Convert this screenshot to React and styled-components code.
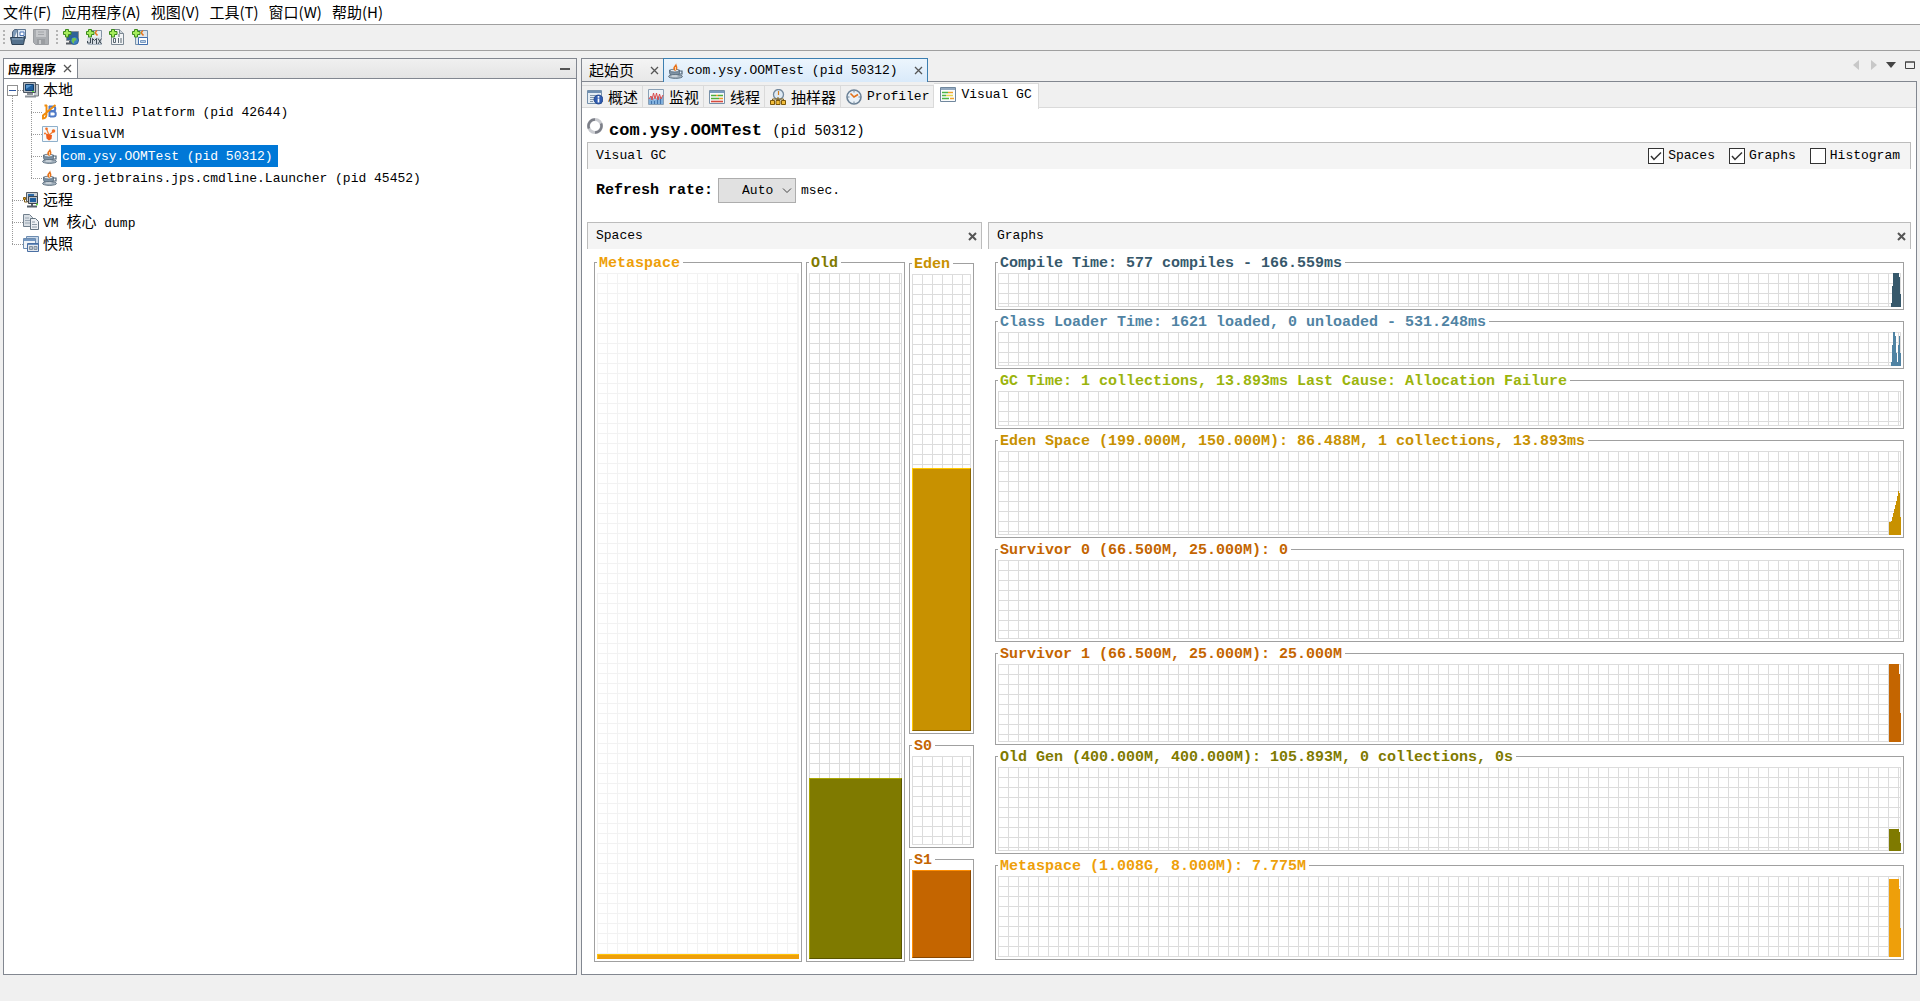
import { useState } from "react";
import styled, { createGlobalStyle, css } from "styled-components";

const mono = `"Liberation Mono", "Noto Sans CJK SC", monospace`;
const sans = `"Noto Sans CJK SC", sans-serif`;

const color = {
    window: "#f0f0f0",
    frame: "#828790",
    header: "#f4f4f4",
    headerLine: "#bcbcbc",
    box: "#a0a0a0",
    grid: "#dcdcdc",
    gridLight: "#f2f2f2",
};

const palette = {
    compile: "#36586b",
    loader: "#5083a3",
    gc: "#9bb40c",
    eden: "#c89100",
    survivor: "#c46500",
    old: "#7f7a00",
    meta: "#ee9f0a",
};

const menus = ["文件(F)", "应用程序(A)", "视图(V)", "工具(T)", "窗口(W)", "帮助(H)"];

const viewTabs = [
    { label: "概述", icon: "overview", cjk: true },
    { label: "监视", icon: "monitor", cjk: true },
    { label: "线程", icon: "threads", cjk: true },
    { label: "抽样器", icon: "sampler", cjk: true },
    { label: "Profiler", icon: "profiler" },
    { label: "Visual GC", icon: "visualgc", active: true },
];

const flat = (value, last) => [...Array(10).fill(value), ...last];

const graphs = [
    { title: "Compile Time: 577 compiles - 166.559ms", size: 58, plot: 34, tone: palette.compile, data: [0, 0, 4, 21, 34, 34, 34, 34, 34, 34, 30, 13] },
    { title: "Class Loader Time: 1621 loaded, 0 unloaded - 531.248ms", size: 58, plot: 34, tone: palette.loader, data: [0, 0, 4, 21, 34, 34, 30, 13, 4, 21, 30, 13] },
    { title: "GC Time: 1 collections, 13.893ms Last Cause: Allocation Failure", size: 59, plot: 34, tone: palette.gc, data: [] },
    { title: "Eden Space (199.000M, 150.000M): 86.488M, 1 collections, 13.893ms", size: 108, plot: 84, tone: palette.eden, data: [13, 13, 14, 18, 22, 26, 30, 34, 39, 44, 42, 18] },
    { title: "Survivor 0 (66.500M, 25.000M): 0", size: 102, plot: 78, tone: palette.survivor, data: [] },
    { title: "Survivor 1 (66.500M, 25.000M): 25.000M", size: 102, plot: 78, tone: palette.survivor, data: flat(78, [68, 29]) },
    { title: "Old Gen (400.000M, 400.000M): 105.893M, 0 collections, 0s", size: 108, plot: 84, tone: palette.old, data: flat(22, [19, 8]) },
    { title: "Metaspace (1.008G, 8.000M): 7.775M", size: 105, plot: 81, tone: palette.meta, data: flat(78, [68, 29]) },
];

const Plus = () => (
    <path d="M2.500 .5h3v2h2.500v3H5.500v2.500h-3V5.500H.5v-3h2z" fill="#a6ec5c" stroke="#3b8a1d" />
);

const JavaCup = () => (
    <>
        <path d="M1.500 7h10v2c0 3-2 4.500-5 4.500s-5-1.500-5-4.500z" fill="#7f93a5" stroke="#4f6375" strokeWidth=".8" />
        <ellipse cx="6.500" cy="7.600" rx="4.500" ry="1.400" fill="#dfe7ee" stroke="#4f6375" strokeWidth=".7" />
        <path d="M11.500 8h2.500v3H11" fill="none" stroke="#4f6375" strokeWidth="1.200" />
        <path d="M8 0c.5 2-3.500 3-2.500 6.500l1.500 1.500 2-1.500C10 4 9 3.500 8 0z" fill="#e8731c" />
        <path d="M7.500 4v3" stroke="#ffd2a0" />
        <ellipse cx="7.500" cy="13.500" rx="7" ry="1.900" fill="#a3b1bd" stroke="#4f6272" strokeWidth=".8" />
        <path d="M3.500 13h6" stroke="#eef2f5" />
    </>
);

const icons = {
    open: (
        <>
            <path d="M2.500 13V3l2-2.500H8" fill="#7f9bb8" stroke="#4b6078" />
            <path d="M7.500 .5h8v9h-8z" fill="#dbe6f2" stroke="#5f7690" />
            <path d="M10 3h4v3.500h-4z" fill="#fff" stroke="#4b75b5" />
            <path d="M.5 8.500h12l2.500-1-1.500 8H2z" fill="#54718c" stroke="#2f4357" />
            <path d="M2 10h11" stroke="#8eabc4" />
        </>
    ),
    save: (
        <>
            <path d="M.5 .5h15v15h-13l-2-2z" fill="#aaadb1" stroke="#9a9da1" />
            <path d="M3 1h10v7H3z" fill="#c6c8cb" />
            <path d="M5 3h6M5 5.500h6" stroke="#a2a5a9" />
            <path d="M4 10h8v6H4z" fill="#9a9da1" />
            <path d="M6 11h2v4H6z" fill="#c8cacc" />
        </>
    ),
    addHost: (
        <>
            <path d="M3.500 2.500h12v9h-12z" fill="#2f6297" stroke="#8b9096" />
            <path d="M3 14.500h8M7 12v2" stroke="#575d64" strokeWidth="2" />
            <circle cx="11.500" cy="11.500" r="4" fill="#3f81c4" stroke="#1f5690" strokeWidth=".8" />
            <path d="M9.500 9l3 0 1 2-2 1-1 3-2-3z" fill="#6fc34d" />
            <Plus />
        </>
    ),
    addJmx: (
        <>
            <path d="M2.500 1.500h13v14h-13z" fill="#e8eef3" stroke="#8394a5" />
            <path d="M11 1.500c-3 2.500-1 3 .5 5" fill="none" stroke="#e8731c" strokeWidth="1.500" />
            <path d="M1 8.500h15v7H1z" fill="#d5dbe1" />
            <path d="M4.500 9v5h-3v-2M6.500 15V9.500l2 2 2-2V15M12 9.500l3.500 5.500M15.500 9.500L12 15" fill="none" stroke="#3e4a55" />
            <Plus />
        </>
    ),
    addDump: (
        <>
            <path d="M2.500 .5h8l4 4v11h-12z" fill="#f2f4f6" stroke="#7b8792" />
            <path d="M10.500 .5v4h4" fill="#ccd3da" stroke="#7b8792" />
            <path d="M4.500 9.500h2v4h-2zM9.500 9v5M12 9v5M10 5v3" fill="none" stroke="#5b6771" />
            <Plus />
        </>
    ),
    addSnapshot: (
        <>
            <path d="M3.500 1.500h12v14h-12z" fill="#dde6ee" stroke="#7590ac" />
            <path d="M11 1.500c-3 2.500-1 3 .5 5" fill="none" stroke="#e8731c" strokeWidth="1.500" />
            <path d="M6.500 8.500h9v7h-9z" fill="#fff" stroke="#426fae" />
            <path d="M8.500 11.500h5v2h-5z" fill="#b9cfe8" stroke="#7c9cc2" />
            <Plus />
        </>
    ),
    computer: (
        <>
            <path d="M11 2.500h4.500V14H11" fill="#c9cdd1" stroke="#6f757b" />
            <path d="M.5 .5h12v10H.5z" fill="#b2b9c0" stroke="#4d5660" />
            <path d="M2.500 2.500h8v6h-8z" fill="#205f9e" stroke="#123d69" />
            <path d="M3 3h6L3 7z" fill="#5997cf" />
            <path d="M9 9.500h2" stroke="#63e63b" />
            <path d="M4 12h6M2 14.500h11" stroke="#8b9198" strokeWidth="2" />
        </>
    ),
    remote: (
        <>
            <path d="M3.500 .5h11v9h-11z" fill="#cbd0d5" stroke="#555e68" />
            <path d="M5 2h6v3H5z" fill="#2e6ba8" />
            <path d="M5.500 4.500h9v7h-9z" fill="#b8c0c8" stroke="#3d4650" />
            <path d="M7 6h6v4H7z" fill="#205f9e" />
            <path d="M4 14.500h10M9 12v2" stroke="#555e68" strokeWidth="2" />
            <path d="M13 12.500h2" stroke="#63e63b" strokeWidth="1.500" />
            <path d="M1.500 6v4h3" fill="none" stroke="#7e5a13" />
            <path d="M.5 5.500h2v2h-2z" fill="#eba928" stroke="#8a5d0a" />
        </>
    ),
    dump: (
        <>
            <path d="M.5 .5h6l3 3v9h-9z" fill="#d9dfe5" stroke="#72808d" />
            <path d="M2 4h4M2 6.500h5M2 9h5" stroke="#9aa6b2" />
            <path d="M7.500 4.500h5l3 3v8h-8z" fill="#edf0f3" stroke="#657481" />
            <path d="M9 8h3M9 10.500h5M9 13h5" stroke="#8d9aa6" />
        </>
    ),
    snapshot: (
        <>
            <path d="M3.500 .5h12v9h-12z" fill="#c8d8ea" stroke="#6d8cb0" />
            <path d="M.5 2.500h12v10H.5z" fill="#eef3f8" stroke="#6d8cb0" />
            <path d="M1 4h11" stroke="#7397c2" strokeWidth="2" />
            <path d="M4.500 7.500h11v8h-11z" fill="#e3e8ee" stroke="#4a6fa3" />
            <path d="M5 8.500h10" stroke="#6c91be" />
            <path d="M6.500 10.500h3v3h-3zM11 10.500h3v3h-3z" fill="#b8c2cc" stroke="#8492a0" />
        </>
    ),
    intellij: (
        <>
            <path d="M7.500 2v11M7 2.500h4c3 0 3 4.500 0 4.500H8M8 7.500h3.500c3 0 3 5 0 5H8" fill="none" stroke="#4f7ac7" strokeWidth="2" />
            <path d="M4.500 1v9c0 3-1 4.500-3.500 4.500v-3L13.500 1M2.500 1.500h2.500" fill="none" stroke="#f08c0c" strokeWidth="1.900" />
        </>
    ),
    visualvm: (
        <>
            <path d="M.5 .5h15v15H.5z" fill="#f7f9fb" stroke="#8fb0cb" />
            <path d="M4.500 3l2.500 6 4.500-3.500" fill="none" stroke="#f08138" strokeWidth="1.300" />
            <circle cx="4.500" cy="2.700" r="1.300" fill="#f26b21" />
            <circle cx="11.500" cy="5" r="1.800" fill="#f26b21" />
            <circle cx="3" cy="7.500" r="1" fill="#f26b21" />
            <path d="M4 7.500l3 1 3 .5-.5 4-2.500 1.500-2.500-2z" fill="#ee5d1b" />
        </>
    ),
    java: <JavaCup />,
    overview: (
        <>
            <path d="M.5 1.500h14v13H.5z" fill="#e5edf4" stroke="#7590ab" />
            <path d="M1 3h13" stroke="#6f8fb0" strokeWidth="2" />
            <path d="M3 6.500h8M3 8.500h5M3 10.500h4M3 12.500h3" stroke="#8296a8" />
            <circle cx="11.500" cy="10.500" r="4.500" fill="#2f5bb0" stroke="#1b3e84" strokeWidth=".8" />
            <path d="M11.500 7v1.800M11.500 9.500v4" stroke="#fff" strokeWidth="1.700" />
        </>
    ),
    monitor: (
        <>
            <path d="M.5 .5h15v15H.5z" fill="#eef3f8" stroke="#8aa0b5" />
            <path d="M1 10l3-3 3 4 3-4 3 2 2-2v8H1z" fill="#82b0dc" />
            <path d="M3.500 12v3M6.500 12v3M9.500 11v4M12.500 10v5" stroke="#4274ae" />
            <path d="M1 10l2-3 1 4 1.500-7 1.500 6 1.500-6L10 11l1.500-6L13 10l2-4" fill="none" stroke="#d84a4a" />
        </>
    ),
    threads: (
        <>
            <path d="M.5 1.500h15v13H.5z" fill="#f8fafb" stroke="#7790a8" />
            <path d="M1 3h14" stroke="#7c9cc0" strokeWidth="2" />
            <path d="M2 6.500h5M9 6.500h5M2 9.500h8" stroke="#4fad3b" strokeWidth="1.600" />
            <path d="M7 6.500h2M10 9.500h4" stroke="#ee9b27" strokeWidth="1.600" />
            <path d="M2 12.500h12" stroke="#d54b3e" strokeWidth="1.600" />
        </>
    ),
    sampler: (
        <>
            <circle cx="8.500" cy="5.500" r="5" fill="#dfeaf4" stroke="#73889c" strokeWidth="1.300" />
            <path d="M8.500 2v4" fill="none" stroke="#d47f1e" strokeWidth="1.200" />
            <path d="M2.500 12v-2h11v2M8 8v4" fill="none" stroke="#826017" />
            <path d="M.5 11.500h4v4h-4zM6 11.500h4v4H6zM11.500 11.500h4v4h-4z" fill="#f1bd3b" stroke="#7b5708" />
        </>
    ),
    profiler: (
        <>
            <circle cx="8" cy="8" r="7" fill="#e9f1f8" stroke="#6b8196" strokeWidth="1.600" />
            <path d="M8 2v1.500M8 12.500V14M2 8h1.500M12.500 8H14" stroke="#6e8295" />
            <path d="M4.500 4.500L8 8l4-2.500" fill="none" stroke="#e2721b" strokeWidth="1.600" />
        </>
    ),
    visualgc: (
        <>
            <path d="M.5 .5h15v14H.5z" fill="#fbfcfd" stroke="#70879d" />
            <path d="M1 2h14" stroke="#93a9c0" strokeWidth="2" />
            <path d="M2 5.500h6M2 8.500h4M2 11.500h7" stroke="#4cb545" strokeWidth="1.500" />
            <path d="M8 5.500h5M10 11.500h4" stroke="#f0a22b" strokeWidth="1.500" />
            <path d="M6 8.500h7" stroke="#e9d64d" strokeWidth="1.500" />
        </>
    ),
};

const Icon = ({ name }) => (
    <IconSvg viewBox="0 0 16 16" aria-hidden="true">{icons[name]}</IconSvg>
);

const Cross = ({ bold }) => (
    <svg width="9" height="9" viewBox="0 0 9 9" aria-hidden="true">
        <path d="M1 1l7 7M8 1L1 8" stroke="#555" strokeWidth={bold ? 2 : 1.3} />
    </svg>
);

const TreeRow = ({ guides, icon, children, selected }) => (
    <Row role="treeitem" aria-selected={!!selected}>
        {guides.map((kind, i) => (
            <Guide key={i} $kind={kind} $nested={i > 0}>
                {kind === "open" && <Expander aria-label="collapse" />}
            </Guide>
        ))}
        <Icon name={icon} />
        <RowLabel $selected={selected}>{children}</RowLabel>
    </Row>
);

const Space = ({ title, tone, size, fill, light, bright, dark }) => (
    <Box $size={size}>
        <Legend $tone={tone}>{title}</Legend>
        <Plot $light={light}>
            {fill && <Fill $tone={tone} $bright={bright} $dark={dark} style={{ height: `${fill}%` }} />}
        </Plot>
    </Box>
);

const Graph = ({ title, tone, size, plot, data }) => (
    <Box $size={size}>
        <Legend $tone={tone}>{title}</Legend>
        <Plot>
            <Series viewBox={`0 0 12 ${plot}`} preserveAspectRatio="none" fill={tone}>
                {data.map((v, i) => (
                    <rect key={i} x={i} y={plot - v} width="1" height={v} />
                ))}
            </Series>
        </Plot>
    </Box>
);

const Check = ({ label, initial }) => {
    const [checked, setChecked] = useState(initial);

    return (
        <CheckLabel>
            <CheckSlot>
                <CheckInput type="checkbox" checked={checked} onChange={() => setChecked(!checked)} />
                {checked && (
                    <svg viewBox="0 0 16 16" aria-hidden="true">
                        <path d="M3 8l3 3.500L13 4.500" fill="none" stroke="#333" strokeWidth="1.500" />
                    </svg>
                )}
            </CheckSlot>
            {label}
        </CheckLabel>
    );
};

export default function App() {
    return (
        <>
            <GlobalStyle />
            <Window>
                <MenuBar>
                    {menus.map((m) => <MenuItem key={m}>{m}</MenuItem>)}
                </MenuBar>
                <Toolbar>
                    <Grip />
                    <ToolButton aria-label="open"><Icon name="open" /></ToolButton>
                    <ToolButton aria-label="save" disabled><Icon name="save" /></ToolButton>
                    <Grip />
                    <ToolButton aria-label="add host"><Icon name="addHost" /></ToolButton>
                    <ToolButton aria-label="add JMX connection"><Icon name="addJmx" /></ToolButton>
                    <ToolButton aria-label="add dump"><Icon name="addDump" /></ToolButton>
                    <ToolButton aria-label="add snapshot"><Icon name="addSnapshot" /></ToolButton>
                </Toolbar>

                <Workspace>
                    <Sidebar>
                        <SideHeader>
                            <SideTab>
                                应用程序
                                <PlainButton aria-label="close"><Cross /></PlainButton>
                            </SideTab>
                            <PlainButton aria-label="minimize">
                                <svg width="10" height="10" viewBox="0 0 10 10"><path d="M0 5h10" stroke="#555" strokeWidth="2" /></svg>
                            </PlainButton>
                        </SideHeader>
                        <Tree role="tree">
                            <TreeRow guides={["open"]} icon="computer"><Cjk>本地</Cjk></TreeRow>
                            <TreeRow guides={["line", "tee"]} icon="intellij">IntelliJ Platform (pid 42644)</TreeRow>
                            <TreeRow guides={["line", "tee"]} icon="visualvm">VisualVM</TreeRow>
                            <TreeRow guides={["line", "tee"]} icon="java" selected>com.ysy.OOMTest (pid 50312)</TreeRow>
                            <TreeRow guides={["line", "end"]} icon="java">org.jetbrains.jps.cmdline.Launcher (pid 45452)</TreeRow>
                            <TreeRow guides={["tee"]} icon="remote"><Cjk>远程</Cjk></TreeRow>
                            <TreeRow guides={["tee"]} icon="dump">VM <Cjk>核心</Cjk> dump</TreeRow>
                            <TreeRow guides={["end"]} icon="snapshot"><Cjk>快照</Cjk></TreeRow>
                        </Tree>
                    </Sidebar>

                    <Main>
                        <DocTabs>
                            <DocTab>
                                <Cjk>起始页</Cjk>
                                <PlainButton aria-label="close"><Cross /></PlainButton>
                            </DocTab>
                            <DocTab $active>
                                <Icon name="java" />
                                com.ysy.OOMTest (pid 50312)
                                <PlainButton aria-label="close"><Cross /></PlainButton>
                            </DocTab>
                            <WindowControls>
                                <PlainButton aria-label="previous" disabled>
                                    <svg width="6" height="10"><path d="M6 0v10L0 5z" fill="#c8c8c8" /></svg>
                                </PlainButton>
                                <PlainButton aria-label="next" disabled>
                                    <svg width="6" height="10"><path d="M0 0v10l6-5z" fill="#c8c8c8" /></svg>
                                </PlainButton>
                                <PlainButton aria-label="list">
                                    <svg width="10" height="6"><path d="M0 0h10L5 6z" fill="#444" /></svg>
                                </PlainButton>
                                <PlainButton aria-label="maximize">
                                    <svg width="10" height="8"><path d="M.5 1h9v6.500h-9zM0 1h10" fill="none" stroke="#444" /></svg>
                                </PlainButton>
                            </WindowControls>
                        </DocTabs>

                        <DocBody>
                            <ViewTabs>
                                {viewTabs.map((t) => (
                                    <ViewTab key={t.label} $active={t.active}>
                                        <Icon name={t.icon} />
                                        {t.cjk ? <Cjk>{t.label}</Cjk> : t.label}
                                    </ViewTab>
                                ))}
                            </ViewTabs>

                            <Content>
                                <Heading>
                                    <svg width="16" height="16" viewBox="0 0 16 16" aria-hidden="true">
                                        <circle cx="8" cy="8" r="6.500" fill="none" stroke="#c9cbd0" strokeWidth="3" />
                                        <path d="M2 10.500A6.500 6.500 0 0 1 8 1.500M14 5.500A6.500 6.500 0 0 1 8 14.500" fill="none" stroke="#7c7f88" strokeWidth="2.500" />
                                    </svg>
                                    <h1>com.ysy.OOMTest <small>(pid 50312)</small></h1>
                                </Heading>

                                <SectionHeader>
                                    Visual GC
                                    <Checks>
                                        <Check label="Spaces" initial />
                                        <Check label="Graphs" initial />
                                        <Check label="Histogram" initial={false} />
                                    </Checks>
                                </SectionHeader>

                                <RefreshRow>
                                    <label htmlFor="rate">Refresh rate:</label>
                                    <SelectSlot>
                                        <Select id="rate" defaultValue="Auto">
                                            <option>Auto</option>
                                        </Select>
                                        <svg width="10" height="6" viewBox="0 0 10 6"><path d="M1 .5l4 4 4-4" fill="none" stroke="#444" /></svg>
                                    </SelectSlot>
                                    msec.
                                </RefreshRow>

                                <Panels>
                                    <Panel>
                                        <SectionHeader>
                                            Spaces
                                            <PlainButton aria-label="close spaces"><Cross bold /></PlainButton>
                                        </SectionHeader>
                                        <SpacesBody>
                                            <SpaceColumn $size={208}>
                                                <Space title="Metaspace" tone={palette.meta} size={709} fill={0.8} light bright="#ffc40a" dark="#ee9f0a" />
                                            </SpaceColumn>
                                            <SpaceColumn $size={99}>
                                                <Space title="Old" tone={palette.old} size={709} fill={26.4} bright="#aaa700" dark="#595500" />
                                            </SpaceColumn>
                                            <SpaceColumn $size={65} $inset>
                                                <Space title="Eden" tone={palette.eden} size={481} fill={57.5} bright="#ffc800" dark="#8c6500" />
                                                <Space title="S0" tone={palette.survivor} size={113} />
                                                <Space title="S1" tone={palette.survivor} size={112} fill={100} bright="#ff8d00" dark="#894700" />
                                            </SpaceColumn>
                                        </SpacesBody>
                                    </Panel>

                                    <Panel>
                                        <SectionHeader>
                                            Graphs
                                            <PlainButton aria-label="close graphs"><Cross bold /></PlainButton>
                                        </SectionHeader>
                                        <GraphsBody>
                                            {graphs.map((g) => <Graph key={g.title} {...g} />)}
                                        </GraphsBody>
                                    </Panel>
                                </Panels>
                            </Content>
                        </DocBody>
                    </Main>
                </Workspace>
            </Window>
        </>
    );
}

const GlobalStyle = createGlobalStyle`
* { box-sizing: border-box; }
body {
margin: 0;
background: ${color.window};
color: #000;
font: 13px/20px ${mono};
}
button, select, input { font: inherit; color: inherit; margin: 0; }
svg { display: block; flex: none; }
`

const IconSvg = styled.svg`
width: 16px;
height: 16px;`

const Cjk = styled.span`
font: 15px/20px ${sans};`

const Window = styled.div`
display: flex;
flex-direction: column;
min-height: 100vh;
padding-bottom: 28px;`

const MenuBar = styled.nav`
display: flex;
gap: 10px;
height: 25px;
padding: 0 3px;
background: #fff;
border-bottom: 1px solid #a0a0a0;`

const MenuItem = styled.button`
padding: 0;
border: 0;
background: none;
font: 15px/24px ${sans};`

const Toolbar = styled.div`
display: flex;
align-items: center;
gap: 7px;
height: 26px;
padding: 0 3px 2px;
border-bottom: 1px solid #a0a0a0;`

const Grip = styled.span`
width: 2px;
height: 14px;
background: repeating-linear-gradient(#b4b4b4 0 2px, transparent 2px 4px);
& + button { margin-left: -2px; }`

const ToolButton = styled.button`
padding: 0;
border: 0;
background: none;`

const PlainButton = styled.button`
display: flex;
padding: 0;
border: 0;
background: none;`

const Workspace = styled.div`
display: grid;
grid-template-columns: minmax(0, 574fr) minmax(0, 1336fr);
gap: 4px;
flex: 1;
padding: 7px 3px 0;`

const Sidebar = styled.aside`
border: 1px solid ${color.frame};
background: #fff;`

const SideHeader = styled.div`
display: flex;
justify-content: space-between;
height: 20px;
padding-right: 6px;
border-bottom: 1px solid ${color.frame};
background: linear-gradient(#f0f0f0, #e4e4e4);
align-items: center;`

const SideTab = styled.div`
display: flex;
align-items: center;
gap: 7px;
height: 19px;
padding: 0 5px 0 4px;
border-right: 1px solid ${color.frame};
background: #fff;
font: bold 12px/19px ${sans};`

const Tree = styled.ul`
margin: 0;
padding: 0 3px;
list-style: none;`

const Row = styled.li`
display: flex;
align-items: center;
height: 22px;
white-space: pre;`

const RowLabel = styled.span`
margin-left: 3px;
padding: 1px 5px 0 1px;
line-height: 21px;
${({ $selected }) => $selected && css`
background: #0078d7;
color: #fff;
`}`

const vLine = "repeating-linear-gradient(#999 0 1px, transparent 1px 2px)";
const hLine = "repeating-linear-gradient(to right, #999 0 1px, transparent 1px 2px)";

const guideBackground = ({ $kind, $nested }) => {
    const x = $nested ? "8px" : "5px";
    const vertical = {
        line: `${vLine} ${x} 0 / 1px 100% no-repeat`,
        tee: `${vLine} ${x} 0 / 1px 100% no-repeat`,
        end: `${vLine} ${x} 0 / 1px 50% no-repeat`,
        open: `${vLine} ${x} 100% / 1px 50% no-repeat`,
    }[$kind];

    return $kind === "line" ? vertical : `${vertical}, ${hLine} ${x} 50% / 100% 1px no-repeat`;
};

const Guide = styled.span`
display: flex;
align-items: center;
flex: none;
width: ${({ $nested }) => ($nested ? 19 : 16)}px;
height: 22px;
background: ${guideBackground};`

const Expander = styled.button`
width: 11px;
height: 11px;
padding: 0;
border: 1px solid #919191;
background: linear-gradient(#2f57a0, #2f57a0) center / 7px 1px no-repeat #fff;`

const Main = styled.main`
display: flex;
flex-direction: column;
min-width: 0;`

const DocTabs = styled.div`
display: flex;
height: 24px;
border-bottom: 1px solid ${color.frame};`

const DocTab = styled.div`
display: flex;
align-items: center;
gap: 3px;
height: 24px;
padding: 0 4px 0 7px;
border: 1px solid ${color.frame};
border-right: 0;
background: linear-gradient(#f4f4f4, #e8e8e8);
white-space: pre;
& > button { margin-left: 13px; }
${({ $active }) => $active && css`
padding-left: 4px;
border: 1px solid #3c7fb1;
border-bottom: 0;
background: linear-gradient(#ecf5fd, #d9eafa);
`}`

const WindowControls = styled.div`
display: flex;
align-items: center;
gap: 9px;
height: 13px;
margin-left: auto;
padding-right: 2px;
& > button:first-child { margin-right: 3px; }`

const DocBody = styled.div`
display: flex;
flex-direction: column;
flex: 1;
border: 1px solid ${color.frame};
border-top: 0;
background: #fff;`

const ViewTabs = styled.div`
display: flex;
align-items: flex-end;
height: 26px;
border-bottom: 1px solid #dadada;
background: ${color.window};`

const ViewTab = styled.button`
display: flex;
align-items: center;
gap: 5px;
height: 22px;
padding: 0 4px 0 5px;
border: 1px solid #dadada;
border-width: 1px 1px 0 0;
background: ${color.window};
white-space: pre;
${({ $active }) => $active && css`
align-self: flex-start;
height: 26px;
margin-top: 1px;
padding: 0 6px 3px;
background: #fff;
`}`

const Content = styled.div`
display: flex;
flex-direction: column;
flex: 1;
padding: 0 5px 12px;`

const Heading = styled.header`
display: flex;
align-items: center;
gap: 6px;
height: 34px;
& > svg { margin-top: 2px; }
h1 {
margin: 11px 0 0;
font: bold 17px/20px ${mono};
}
small {
font-size: 14px;
font-weight: 400;
}`

const SectionHeader = styled.div`
display: flex;
align-items: center;
justify-content: space-between;
height: 27px;
padding: 0 4px 0 8px;
border: 1px solid ${color.headerLine};
border-bottom: 0;
background: ${color.header};`

const Checks = styled.div`
display: flex;
gap: 14px;
padding-right: 6px;`

const CheckLabel = styled.label`
display: flex;
align-items: center;
gap: 4px;`

const CheckSlot = styled.span`
display: grid;
width: 16px;
height: 16px;
& > * { grid-area: 1 / 1; }
svg { pointer-events: none; }`

const CheckInput = styled.input`
appearance: none;
width: 16px;
height: 16px;
border: 1px solid #333;
background: #fff;`

const RefreshRow = styled.div`
display: flex;
align-items: center;
gap: 5px;
height: 53px;
padding: 0 0 10px 9px;
label {
font: bold 15px/20px ${mono};
}`

const SelectSlot = styled.span`
display: grid;
align-items: center;
& > * { grid-area: 1 / 1; }
svg {
justify-self: end;
margin-right: 4px;
pointer-events: none;
}`

const Select = styled.select`
appearance: none;
width: 78px;
height: 25px;
padding: 0 20px 0 23px;
border: 1px solid #adadad;
border-radius: 0;
background: #e1e1e1;`

const Panels = styled.div`
display: grid;
grid-template-columns: minmax(0, 395fr) minmax(0, 923fr);
gap: 6px;
flex: 1;`

const Panel = styled.section`
display: flex;
flex-direction: column;
min-width: 0;`

const SpacesBody = styled.div`
display: flex;
gap: 4px;
flex: 1;
padding: 3px 8px 0 7px;`

const SpaceColumn = styled.div`
display: flex;
flex-direction: column;
flex: ${({ $size }) => `${$size} 1 ${$size}px`};
gap: 1px;
min-width: 0;
padding: ${({ $inset }) => ($inset ? "1px 0" : "0")};`

const GraphsBody = styled.div`
display: flex;
flex-direction: column;
gap: 1px;
flex: 1;
padding: 3px 7px 2px;`

const Box = styled.fieldset`
display: flex;
flex-direction: column;
flex: ${({ $size }) => `${$size} 1 ${$size}px`};
min-width: 0;
min-height: 0;
margin: 0;
padding: 0 2px 2px;
border: 1px solid ${color.box};`

const Legend = styled.legend`
padding: 2px 3px 0 2px;
color: ${({ $tone }) => $tone};
font: bold 15px/19px ${mono};
white-space: nowrap;`

const Plot = styled.div`
--line: ${({ $light }) => ($light ? color.gridLight : color.grid)};
display: flex;
flex-direction: column;
justify-content: flex-end;
flex: 1;
min-height: 0;
background:
linear-gradient(to right, var(--line) 1px, transparent 1px) 0 0 / 10px 10px,
linear-gradient(var(--line) 1px, transparent 1px) 0 0 / 10px 10px;
box-shadow: inset -1px -1px var(--line);`

const Fill = styled.div`
background: ${({ $tone }) => $tone};
border: 1px solid;
border-color: ${({ $bright, $dark }) => `${$bright} ${$dark} ${$dark} ${$bright}`};`

const Series = styled.svg`
align-self: flex-end;
width: 12px;
flex: 1 1 0;
height: 100%;
min-height: 0;
shape-rendering: crispEdges;`
